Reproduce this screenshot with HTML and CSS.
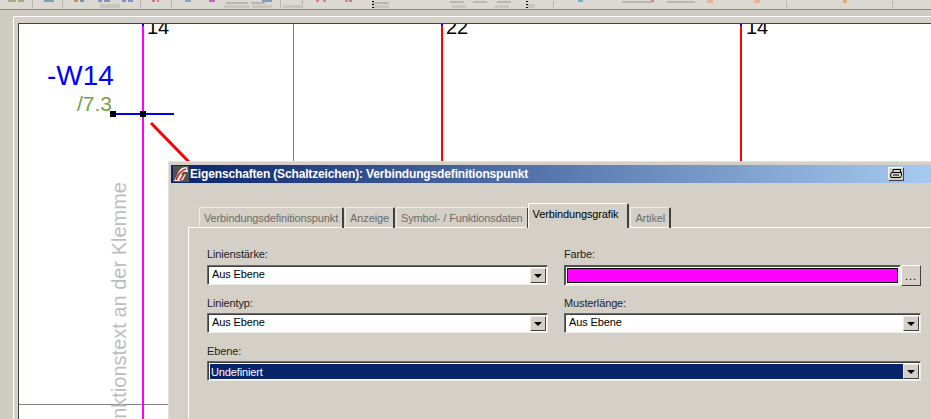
FILE: index.html
```html
<!DOCTYPE html>
<html lang="de">

<head>
    <meta charset="UTF-8">
    <title>Eigenschaften (Schaltzeichen)</title>
    <link rel="stylesheet" href="styles.css">
</head>

<body>
    <div class="toolbar">
        <!-- only the lower edge of the icons is visible -->
        <svg class="toolbar-icons" width="931" height="9" viewBox="0 0 931 9">
            <g fill="#b9b6ae">
                <rect x="32" y="0" width="1" height="8" />
                <rect x="62" y="0" width="1" height="8" />
                <rect x="140" y="0" width="1" height="8" />
                <rect x="171" y="0" width="1" height="8" />
                <rect x="226" y="2" width="22" height="2" />
                <rect x="251" y="2" width="14" height="2" />
                <rect x="280" y="0" width="1" height="8" />
                <rect x="302" y="0" width="1" height="8" />
                <rect x="372" y="2" width="17" height="2" />
                <rect x="450" y="1" width="14" height="2" />
                <rect x="473" y="1" width="14" height="2" />
                <rect x="497" y="1" width="14" height="2" />
                <rect x="553" y="1" width="1" height="7" />
                <rect x="622" y="1" width="30" height="2" />
                <rect x="667" y="1" width="28" height="2" />
                <rect x="786" y="1" width="1" height="7" />
                <rect x="892" y="1" width="1" height="7" />
            </g>
            <g fill="#c9c6be">
                <rect x="100" y="4" width="20" height="4" />
                <rect x="224" y="5" width="26" height="3" />
                <rect x="252" y="5" width="20" height="3" />
                <rect x="283" y="5" width="20" height="3" />
                <rect x="373" y="5" width="16" height="3" />
                <rect x="452" y="5" width="14" height="3" />
                <rect x="495" y="5" width="14" height="3" />
                <rect x="527" y="4" width="8" height="4" />
            </g>
            <g class="icon-colors">
                <rect x="8" y="0" width="8" height="2" fill="#8a9a70" />
                <rect x="18" y="0" width="6" height="2" fill="#7fa05a" />
                <rect x="44" y="0" width="10" height="2" fill="#4a8ab0" />
                <rect x="74" y="0" width="4" height="2" fill="#c06a40" />
                <rect x="80" y="0" width="4" height="2" fill="#5a70b0" />
                <rect x="98" y="0" width="4" height="2" fill="#5a70c0" />
                <rect x="104" y="0" width="6" height="2" fill="#5a70c0" />
                <rect x="122" y="0" width="4" height="2" fill="#5a70c0" />
                <rect x="128" y="0" width="5" height="2" fill="#5a70c0" />
                <rect x="152" y="0" width="3" height="2" fill="#d84060" />
                <rect x="157" y="0" width="2" height="2" fill="#d84060" />
                <rect x="185" y="0" width="6" height="2" fill="#5a90c0" />
                <rect x="209" y="0" width="6" height="2" fill="#c030c0" />
                <rect x="262" y="0" width="10" height="2" fill="#5a80b0" />
                <rect x="316" y="0" width="3" height="2" fill="#e06070" />
                <rect x="323" y="0" width="3" height="2" fill="#e06070" />
                <rect x="345" y="0" width="3" height="2" fill="#e06070" />
                <rect x="349" y="0" width="3" height="2" fill="#c05050" />
                <rect x="578" y="0" width="5" height="2" fill="#40a0d0" />
                <rect x="651" y="0" width="3" height="2" fill="#e06080" />
                <rect x="707" y="0" width="6" height="3" fill="#f0a080" />
                <rect x="754" y="0" width="6" height="3" fill="#f0a080" />
                <rect x="843" y="0" width="4" height="3" fill="#d0a050" />
            </g>
            <rect x="372" y="1" width="2" height="1" fill="#000" />
            <rect x="372" y="4" width="2" height="1" fill="#000" />
            <rect x="372" y="7" width="2" height="1" fill="#000" />
            <rect x="526" y="1" width="2" height="1" fill="#000" />
            <rect x="526" y="4" width="2" height="1" fill="#000" />
            <rect x="526" y="7" width="2" height="1" fill="#000" />
        </svg>
    </div>

    <div class="workspace">
        <div class="sheet">
            <div class="canvas">
                <svg class="drawing" width="912" height="395" viewBox="19 24 912 395">
                    <line class="rule" x1="293.5" y1="24" x2="293.5" y2="170" />
                    <line class="rule" x1="19" y1="404.5" x2="170" y2="404.5" />
                    <line class="wire-red" x1="442" y1="24" x2="442" y2="170" />
                    <line class="wire-red" x1="741" y1="24" x2="741" y2="170" />
                    <line class="wire-magenta" x1="143" y1="24" x2="143" y2="419" />
                    <line class="wire-blue" x1="113" y1="114" x2="174" y2="114" />
                    <line class="wire-diagonal" x1="151" y1="123" x2="190" y2="163" />
                    <rect class="tip" x="142" y="24" width="2" height="2" />
                    <rect class="tip" x="441" y="24" width="2" height="2" />
                    <rect class="tip" x="740" y="24" width="2" height="2" />
                    <rect class="node" x="110" y="111" width="6" height="6" />
                    <rect class="node" x="140" y="111" width="6" height="6" />
                    <text class="pin" x="147" y="34">14</text>
                    <text class="pin" x="446" y="34">22</text>
                    <text class="pin" x="746" y="34">14</text>
                    <text class="tag" x="47" y="85">-W14</text>
                    <text class="ref" x="77" y="111">/7.3</text>
                    <text class="func" transform="translate(126 182) rotate(-90)">Funktionstext an der Klemme</text>
                </svg>
            </div>
        </div>
    </div>

    <div class="dialog">
        <div class="titlebar">
            <svg class="title-icon" width="16" height="16" viewBox="0 0 16 16">
                <rect width="16" height="16" fill="#55524e" />
                <path d="M1 15 L6 5 Q8 1 14 1 L15 6 L10 6 L8 9 L13 8 L10 14 L5 15 Z" fill="#f0ecea" />
                <path d="M3 14 Q6 5 13 3 M7 14 L11 8" stroke="#d02020" stroke-width="1.5" fill="none" />
            </svg>
            <span class="title-text">Eigenschaften (Schaltzeichen): Verbindungsdefinitionspunkt</span>
            <button class="print-btn">
                <svg width="12" height="10" viewBox="0 0 12 10">
                    <path d="M3 .5 H10.5 V3.5 H3 Z M1.500 3.500 H11.500 V6.500 L10.500 8.500 H1 L.5 6 Z" fill="#d4d0c8" stroke="#000" />
                    <path d="M3 6 H9" stroke="#000" />
                </svg>
            </button>
        </div>

        <div class="tabs">
            <div class="tab">Verbindungsdefinitionspunkt</div>
            <div class="tab">Anzeige</div>
            <div class="tab">Symbol- / Funktionsdaten</div>
            <div class="tab active">Verbindungsgrafik</div>
            <div class="tab">Artikel</div>
        </div>

        <div class="pane">
            <div class="field first">
                <label>Linienstärke:</label>
                <div class="combo">
                    <span class="value">Aus Ebene</span>
                    <span class="arrow"></span>
                </div>
            </div>
            <div class="field first">
                <label>Farbe:</label>
                <div class="color-row">
                    <div class="color-box">
                        <div class="swatch"></div>
                    </div>
                    <button class="more">...</button>
                </div>
            </div>
            <div class="field">
                <label>Linientyp:</label>
                <div class="combo">
                    <span class="value">Aus Ebene</span>
                    <span class="arrow"></span>
                </div>
            </div>
            <div class="field">
                <label>Musterlänge:</label>
                <div class="combo">
                    <span class="value">Aus Ebene</span>
                    <span class="arrow"></span>
                </div>
            </div>
            <div class="field wide">
                <label>Ebene:</label>
                <div class="combo">
                    <span class="value selected">Undefiniert</span>
                    <span class="arrow"></span>
                </div>
            </div>
        </div>
    </div>
</body>

</html>
```

FILE: styles.css
```css
html {
    overflow: hidden;
}

body {
    font-family: "Liberation Sans", Arial, sans-serif;
    font-size: 11px;
    letter-spacing: -0.13px;
    margin: 0;
    width: 931px;
    height: 419px;
    overflow: hidden;
    position: relative;
    background-color: #d4d0c8;
    color: #000;
}

.toolbar {
    height: 9px;
    background-color: #dcd9d2;
    border-bottom: 1px solid #8a8884;
    box-shadow: 0 1px 0 #fff;
}

.toolbar-icons {
    display: block;
}

.icon-colors {
    opacity: 0.7;
}

.workspace {
    height: 409px;
    padding: 6px 0 0 13px;
    box-sizing: border-box;
    background-color: #cfccc3;
}

.sheet {
    height: 100%;
    padding: 6px 0 0 4px;
    box-sizing: border-box;
    border-top: 1px solid #fff;
    border-left: 1px solid #fff;
    background-color: #d4d0c8;
}

.canvas {
    height: 100%;
    box-sizing: border-box;
    border-top: 1px solid #404040;
    border-left: 1px solid #404040;
    background-color: #fff;
    overflow: hidden;
}

.drawing {
    display: block;
}

.drawing text {
    letter-spacing: 0;
}

.rule {
    stroke: #808080;
    stroke-width: 1;
}

.wire-red {
    stroke: #ff0000;
    stroke-width: 2;
}

.wire-magenta {
    stroke: #ff00ff;
    stroke-width: 2;
}

.wire-blue {
    stroke: #0000ff;
    stroke-width: 2;
}

.wire-diagonal {
    stroke: #ff0000;
    stroke-width: 3;
}

.tip {
    fill: #0000ff;
}

.node {
    fill: #000;
}

.pin {
    font-size: 20px;
    fill: #000;
}

.tag {
    font-size: 28px;
    fill: #0000ff;
}

.ref {
    font-size: 21px;
    fill: #76a04a;
}

.func {
    font-size: 20px;
    fill: #bdbdbd;
    text-anchor: end;
}

/* dialog lies over the drawing and runs off the right edge */
.dialog {
    position: absolute;
    left: 168px;
    top: 161px;
    right: 0;
    bottom: 0;
    display: flex;
    flex-direction: column;
    box-sizing: border-box;
    padding: 3px 0 0 2px;
    background-color: #d4d0c8;
    border-top: 1px solid #e6e3dc;
    border-left: 1px solid #e6e3dc;
}

.titlebar {
    display: flex;
    align-items: center;
    flex: none;
    height: 18px;
    padding-left: 2px;
    background: linear-gradient(to right, #0a246a, #a6caf0);
}

.title-icon {
    flex: none;
    margin-right: 1px;
}

.title-text {
    flex: 1;
    color: #fff;
    font-size: 12px;
    font-weight: bold;
    letter-spacing: -0.15px;
    white-space: nowrap;
}

.print-btn {
    width: 16px;
    height: 14px;
    margin-right: 27px;
    padding: 0;
    display: flex;
    align-items: center;
    justify-content: center;
    background-color: #d4d0c8;
    border: 1px solid;
    border-color: #fff #404040 #404040 #fff;
}

.tabs {
    display: flex;
    align-items: flex-end;
    flex: none;
    height: 45px;
    margin-bottom: -1px;
    padding-left: 28px;
    position: relative;
}

.tab {
    height: 21px;
    line-height: 20px;
    padding: 0 4px;
    margin-right: 1px;
    box-sizing: border-box;
    color: #6e6c66;
    white-space: nowrap;
    border-top: 1px solid #eeece7;
    border-left: 1px solid #eeece7;
    border-right: 2px solid #404040;
    border-radius: 2px 2px 0 0;
}

.tab.active {
    height: 25px;
    line-height: 20px;
    margin: 0 1px 0 -2px;
    padding: 0 9px 4px 4px;
    color: #000;
    background-color: #d4d0c8;
    border-top-color: #fff;
    border-left-color: #fff;
    position: relative;
    z-index: 1;
}

.pane {
    flex: 1;
    display: grid;
    grid-template-columns: 341px 357px;
    column-gap: 16px;
    row-gap: 12px;
    align-content: start;
    margin-left: 17px;
    padding: 20px 0 0 18px;
    border-top: 1px solid #fff;
    border-left: 1px solid #fff;
}

.field label {
    display: block;
    height: 13px;
    margin-bottom: 3px;
    color: #222;
}

.field.first label {
    margin-bottom: 4px;
}

.field.wide {
    grid-column: 1 / 3;
}

.combo {
    display: flex;
    height: 20px;
    padding: 2px 1px 1px 2px;
    box-sizing: border-box;
    background-color: #fff;
    border: 1px solid;
    border-color: #6b6b6b #eeece7 #eeece7 #6b6b6b;
    box-shadow: inset 1px 1px 0 #404040;
}

.value {
    flex: 1;
    line-height: 13px;
    padding-left: 2px;
}

.value.selected {
    line-height: 16px;
    padding-left: 1px;
    color: #fff;
    background-color: #0a246a;
}

.arrow {
    flex: none;
    width: 16px;
    box-sizing: border-box;
    position: relative;
    background-color: #d4d0c8;
    border: 1px solid;
    border-color: #eeece7 #404040 #404040 #eeece7;
}

/* little black triangle */
.arrow::after {
    content: "";
    position: absolute;
    left: 3px;
    top: 5px;
    border-left: 4px solid transparent;
    border-right: 4px solid transparent;
    border-top: 4px solid #000;
}

.color-row {
    display: flex;
    height: 20px;
}

.color-box {
    flex: 1;
    height: 21px;
    padding: 1px;
    box-sizing: border-box;
    background-color: #fff;
    border: 2px solid;
    border-color: #505050 #eeece7 #eeece7 #505050;
}

.swatch {
    height: 100%;
    box-sizing: border-box;
    background-color: #ff00ff;
    border: 1px solid #000;
}

.more {
    width: 20px;
    height: 21px;
    padding: 0;
    font-family: "Liberation Sans", Arial, sans-serif;
    font-size: 11px;
    letter-spacing: 1px;
    background-color: #d4d0c8;
    border: 1px solid;
    border-color: #fff #404040 #404040 #fff;
}
```
